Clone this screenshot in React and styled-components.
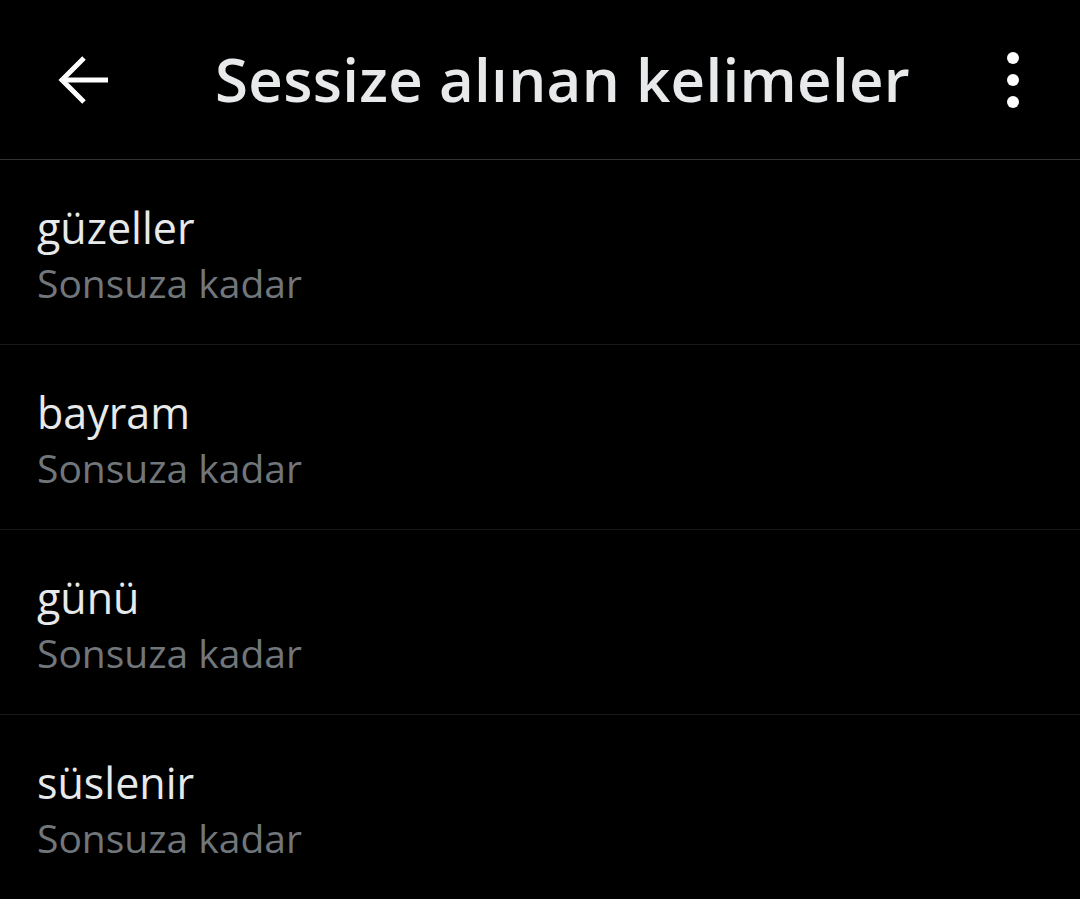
import React from 'react';
import styled, { createGlobalStyle } from 'styled-components';

const GlobalStyle = createGlobalStyle`
  html, body {
    margin: 0;
    padding: 0;
    background: #000;
  }
  body {
    font-family: "Open Sans", Roboto, "DejaVu Sans", sans-serif;
  }
`

const Page = styled.div`
  width: 1080px;
  height: 899px;
  background: #000;
  color: #e7e9ea;
  overflow: hidden;
`

const Header = styled.header`
  height: 160px;
  display: flex;
  align-items: center;
  border-bottom: 1px solid #2f3336;
  box-sizing: border-box;
  padding: 0 57px 0 58px;
`

const IconButton = styled.button`
  background: none;
  border: 0;
  padding: 0;
  display: flex;
  align-items: center;
  justify-content: center;
  color: #fff;
  cursor: pointer;
`

const Title = styled.h1`
  flex: 1;
  margin: 0 0 0 105px;
  font-size: 60px;
  font-weight: 600;
  letter-spacing: 0.3px;
  color: #e7e9ea;
  line-height: 1;
  padding-bottom: 2px;
`

const Row = styled.div`
  height: 185px;
  box-sizing: border-box;
  border-bottom: 1px solid #16181c;
  padding: 6px 37px 0;
  display: flex;
  flex-direction: column;
  justify-content: center;
  gap: 2px;
`

const Word = styled.div`
  font-size: 43px;
  color: #e7e9ea;
  line-height: 54px;
`

const Duration = styled.div`
  font-size: 39px;
  color: #71767b;
  line-height: 52px;
`

const words = ['güzeller', 'bayram', 'günü', 'süslenir'];

const App = () => {
  return (
    <Page>
      <GlobalStyle />
      <Header>
        <IconButton aria-label="Geri">
          <svg width="52" height="52" viewBox="0 0 52 52" fill="none" stroke="currentColor" strokeWidth="5" strokeLinecap="butt">
            <path d="M4 26 H50" />
            <path d="M26 4 L4 26 L26 48" />
          </svg>
        </IconButton>
        <Title>Sessize alınan kelimeler</Title>
        <IconButton aria-label="Diğer">
          <svg width="20" height="60" viewBox="0 0 20 60" fill="currentColor">
            <circle cx="10" cy="8" r="6" />
            <circle cx="10" cy="30" r="6" />
            <circle cx="10" cy="52" r="6" />
          </svg>
        </IconButton>
      </Header>
      {words.map((w) => (
        <Row key={w}>
          <Word>{w}</Word>
          <Duration>Sonsuza kadar</Duration>
        </Row>
      ))}
    </Page>
  );
};

export default App;
